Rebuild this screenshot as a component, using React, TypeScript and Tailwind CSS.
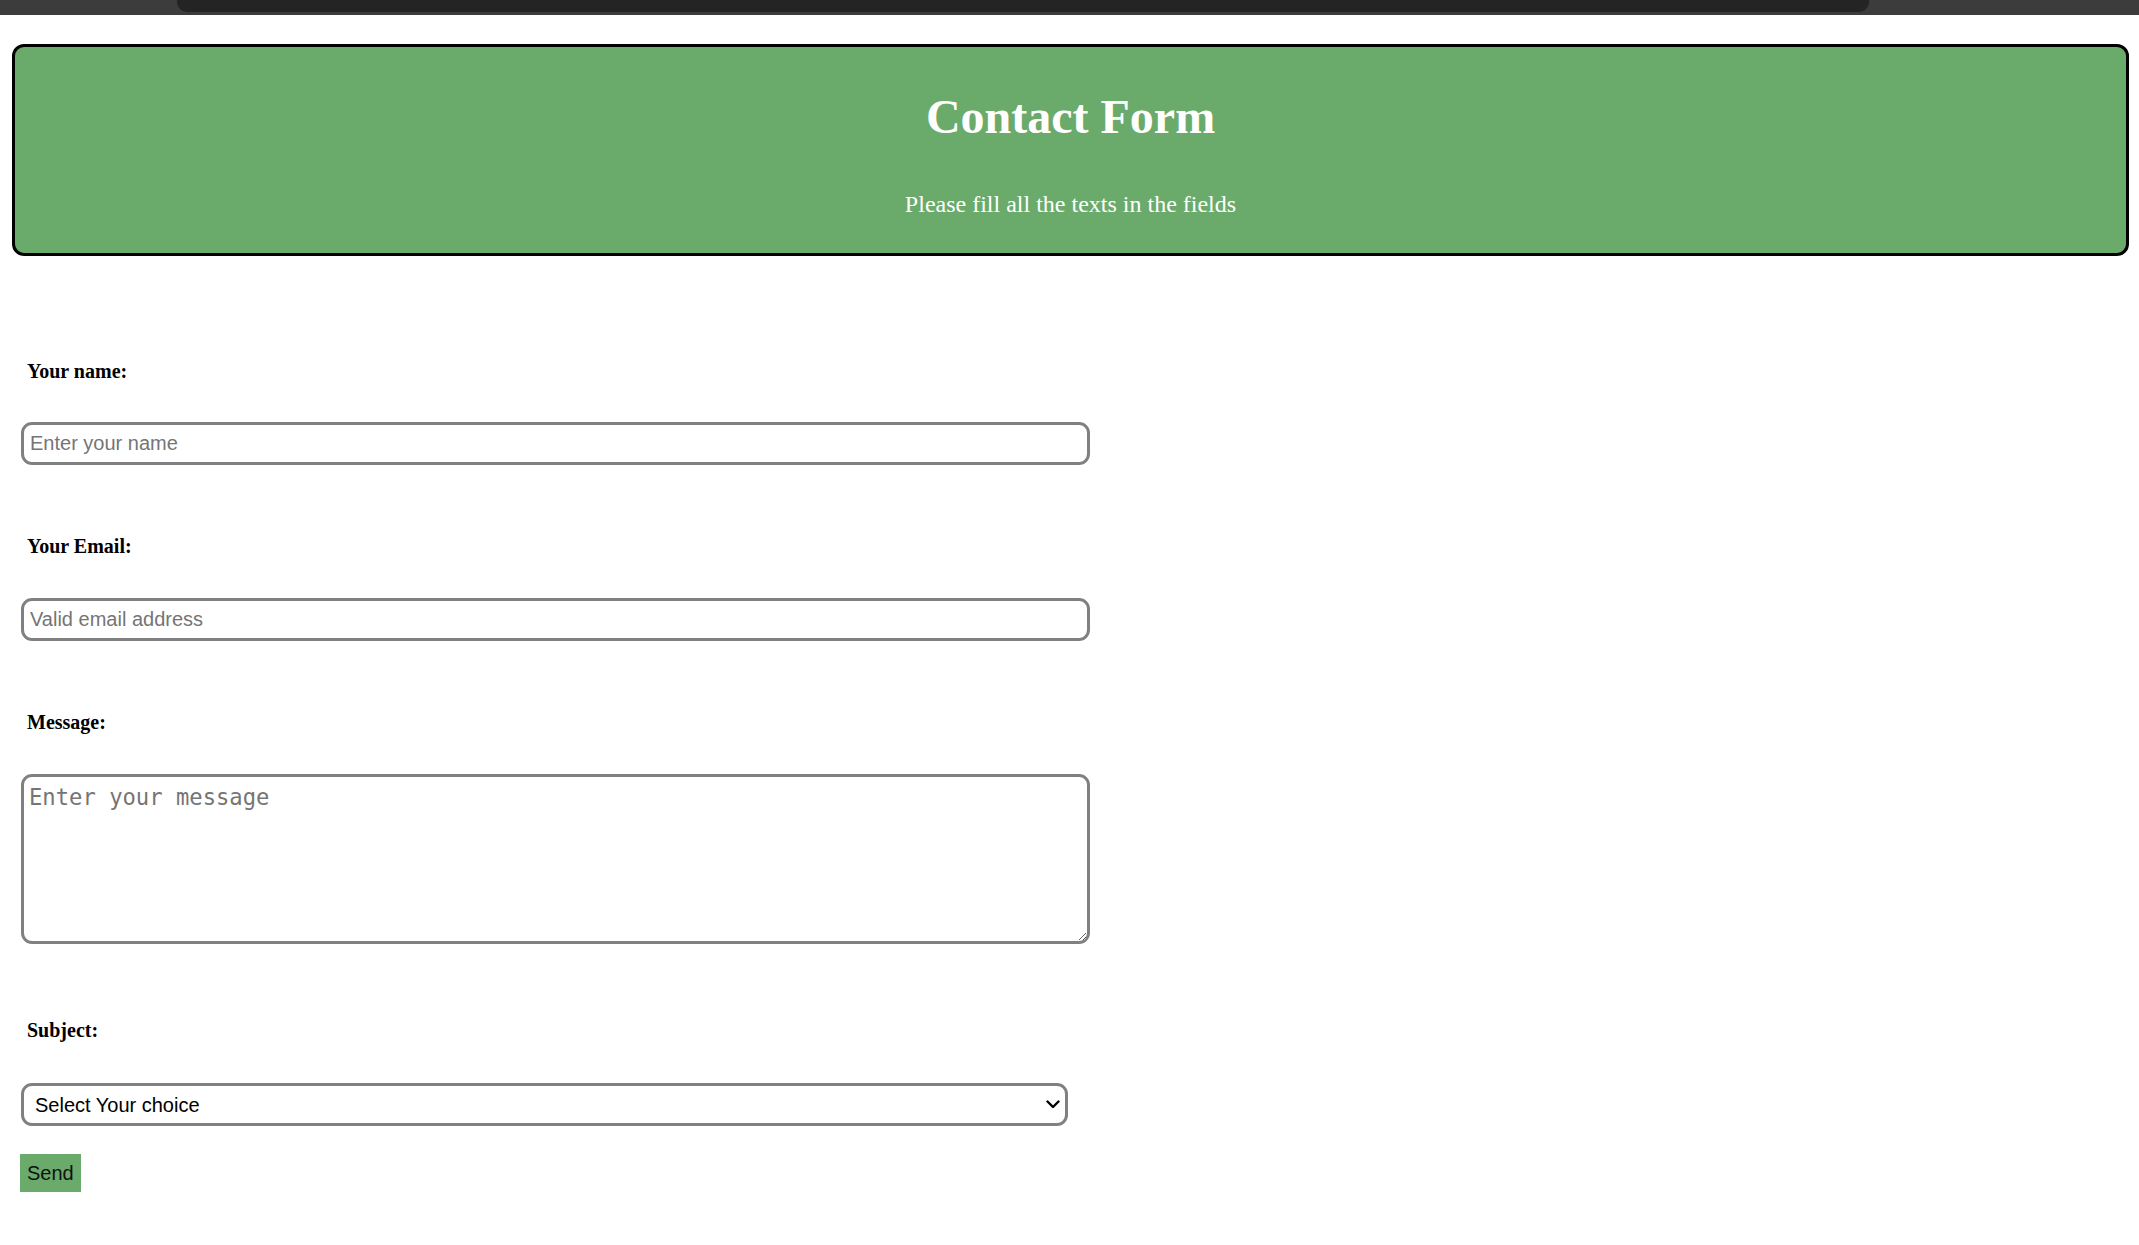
import React from "react";

export default function App() {
  const serif = { fontFamily: '"Liberation Serif", "Times New Roman", serif' };
  return (
    <div className="min-h-screen bg-white" style={serif}>
      {/* browser-ish top strip */}
      <div className="h-[15px] bg-[#3c3c3c] flex">
        <div className="ml-[177px] w-[1692px] h-[12px] bg-[#242424] rounded-b-[10px]" />
      </div>

      {/* header */}
      <div className="mt-[29px] mx-[12px] w-[2117px] border-[3px] border-black rounded-[12px] bg-[#6aab6c] text-white text-center pb-[35px]">
        <h1 className="mt-[43px] text-[48px] font-bold leading-[53px]">Contact Form</h1>
        <p className="mt-[48px] text-[24px] leading-[27px]">Please fill all the texts in the fields</p>
      </div>

      <form className="flex flex-col items-start">
        <label className="mt-[104px] ml-[27px] text-[20px] font-bold leading-[22px] text-black">Your name:</label>
        <input
          type="text"
          placeholder="Enter your name"
          className="mt-[40px] ml-[21px] w-[1069px] h-[43px] border-[3px] border-[#808080] rounded-[11px] px-[6px] text-[20px] placeholder:text-[#757575] outline-none"
          style={{ fontFamily: '"Liberation Sans", Arial, sans-serif' }}
        />

        <label className="mt-[70px] ml-[27px] text-[20px] font-bold leading-[22px] text-black">Your Email:</label>
        <input
          type="email"
          placeholder="Valid email address"
          className="mt-[41px] ml-[21px] w-[1069px] h-[43px] border-[3px] border-[#808080] rounded-[11px] px-[6px] text-[20px] placeholder:text-[#757575] outline-none"
          style={{ fontFamily: '"Liberation Sans", Arial, sans-serif' }}
        />

        <label className="mt-[70px] ml-[27px] text-[20px] font-bold leading-[22px] text-black">Message:</label>
        <textarea
          placeholder="Enter your message"
          className="mt-[41px] ml-[21px] w-[1069px] h-[170px] border-[3px] border-[#808080] rounded-[11px] px-[5px] pt-[7px] text-[22.2px] leading-[26px] placeholder:text-[#757575] outline-none block"
          style={{ fontFamily: '"DejaVu Sans Mono", Consolas, monospace' }}
        />

        <label className="mt-[75px] ml-[27px] text-[20px] font-bold leading-[22px] text-black">Subject:</label>
        <div className="relative mt-[42px] ml-[21px]">
          <select
            className="appearance-none w-[1047px] h-[43px] border-[3px] border-[#808080] rounded-[11px] pl-[11px] pr-[30px] text-[20px] text-black bg-white outline-none"
            style={{ fontFamily: '"Liberation Sans", Arial, sans-serif' }}
            defaultValue=""
          >
            <option value="">Select Your choice</option>
            <option value="general">General</option>
            <option value="support">Support</option>
          </select>
          <svg
            className="absolute right-[8px] top-[17px] pointer-events-none"
            width="14"
            height="9"
            viewBox="0 0 14 9"
            fill="none"
          >
            <path d="M1.5 1.5 L7 7 L12.5 1.5" stroke="#000" strokeWidth="2.4" strokeLinecap="round" strokeLinejoin="round" />
          </svg>
        </div>

        <button
          type="button"
          className="mt-[28px] ml-[20px] h-[38px] px-[7px] bg-[#6aab6c] text-[20px] text-[#111] leading-[23px]"
          style={{ fontFamily: '"Liberation Sans", Arial, sans-serif' }}
        >
          Send
        </button>
      </form>
    </div>
  );
}
